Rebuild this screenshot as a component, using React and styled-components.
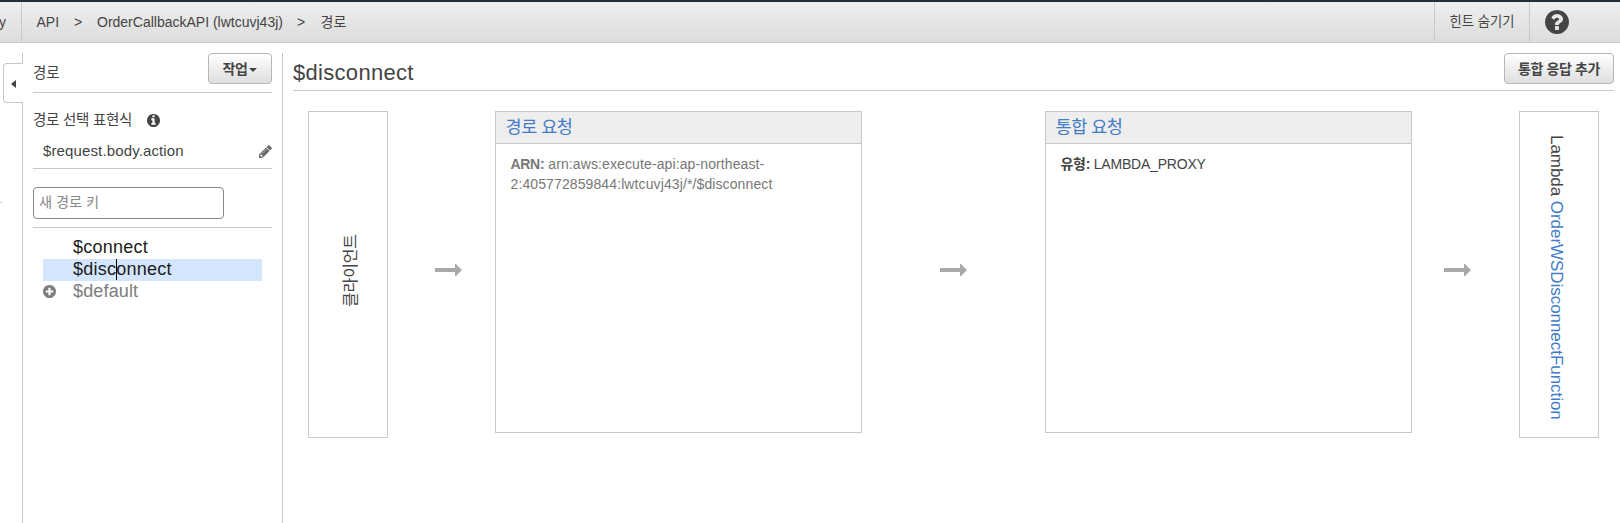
import React from "react";
import styled, { createGlobalStyle } from "styled-components";

const GlobalStyle = createGlobalStyle`
  * { box-sizing: border-box; }
  body {
    margin: 0;
    background: #fff;
    color: #444;
    font-family: "Liberation Sans", "Noto Sans CJK KR", sans-serif;
    font-size: 14px;
    line-height: 20px;
    overflow: hidden;
  }
`;

const Page = styled.div`
  display: flex;
  flex-direction: column;
  width: 1620px;
  height: 523px;
  overflow: hidden;
`;

const Header = styled.header`
  display: flex;
  flex: none;
  height: 43px;
  border-top: 2px solid #232f3e;
  border-bottom: 1px solid #ccc;
  background: linear-gradient(#eee, #ddd);
`;

const Product = styled.div`
  display: flex;
  justify-content: flex-end;
  width: 22px;
  padding: 10px 15px 0 0;
  border-right: 1px solid #c8c8c8;
`;

const Crumbs = styled.nav`
  display: flex;
  flex: 1;
  padding: 10px 0 0 14.5px;
  white-space: nowrap;
`;

const Crumb = styled.span`
  width: ${(p) => p.$width}px;
`;

const HintToggle = styled.div`
  display: flex;
  justify-content: center;
  width: 95px;
  padding-top: 10px;
  font-size: 13.3px;
  border-left: 1px solid #c8c8c8;
`;

const Help = styled.div`
  width: 91px;
  padding: 8px 0 0 15px;
  border-left: 1px solid #c8c8c8;
`;

const Icon = styled.svg`
  display: block;
  flex: none;
  width: ${(p) => p.$size}px;
  height: ${(p) => p.$size}px;
  fill: currentColor;
  fill-rule: evenodd;
`;

const Body = styled.div`
  display: flex;
  flex: 1;
  padding-top: 10px;
`;

const Gutter = styled.div`
  display: flex;
  flex-direction: column;
  width: 23px;
`;

const GutterLine = styled.div`
  align-self: flex-end;
  width: 1px;
  height: ${(p) => p.$height};
  flex: ${(p) => (p.$height ? "none" : 1)};
  background: #c8c8c8;
`;

const CollapseTab = styled.div`
  display: flex;
  align-items: center;
  align-self: flex-end;
  width: 20px;
  height: 40px;
  padding: 2px 0 0 7px;
  border: 1px solid #c8c8c8;
  border-right: 0;
  border-radius: 4px 0 0 4px;
`;

const RemnantLine = styled.div`
  position: absolute;
  left: 0;
  top: 202px;
  width: 2px;
  height: 1px;
  background: #c8c8c8;
`;

const Sidebar = styled.aside`
  width: 260px;
  padding: 0 10px;
  border-right: 1px solid #c8c8c8;
`;

const SidebarHead = styled.div`
  display: flex;
  justify-content: space-between;
  height: 40px;
  border-bottom: 1px solid #c8c8c8;
`;

const SidebarTitle = styled.div`
  padding-top: 10px;
  font-size: 14.5px;
`;

const Button = styled.button`
  display: flex;
  align-items: center;
  justify-content: center;
  gap: 2px;
  width: ${(p) => p.$width}px;
  height: 31px;
  padding: 0 0 1px;
  border: 1px solid #b6b6b6;
  border-radius: 4px;
  background: linear-gradient(#fff, #dedede);
  color: #444;
  font: bold 14px "Liberation Sans", "Noto Sans CJK KR", sans-serif;
  white-space: nowrap;
  letter-spacing: -0.4px;
  svg { margin-top: 3px; }
`;

const Expression = styled.div`
  height: 76px;
  border-bottom: 1px solid #c8c8c8;
`;

const ExpressionLabel = styled.div`
  display: flex;
  align-items: center;
  justify-content: space-between;
  width: 126.5px;
  padding-top: 17px;
  font-size: 14.5px;
  letter-spacing: -0.25px;
  white-space: nowrap;
`;

const ExpressionValue = styled.div`
  display: flex;
  justify-content: space-between;
  align-items: center;
  padding: 11px 0 0 10px;
  font-size: 15px;
  letter-spacing: 0.13px;
  svg { color: #6a6a6a; }
`;

const NewRoute = styled.div`
  height: 59px;
  padding-top: 18px;
  border-bottom: 1px solid #c8c8c8;
`;

const RouteInput = styled.input`
  display: block;
  width: 191px;
  height: 32px;
  padding: 0 5px 2px;
  border: 1px solid #888;
  border-radius: 4px;
  font: 14.2px "Liberation Sans", "Noto Sans CJK KR", sans-serif;
  outline: none;
  &::placeholder { color: #888; opacity: 1; }
`;

const RouteList = styled.div`
  padding: 9px 10px 0;
`;

const RouteRow = styled.div`
  display: flex;
  align-items: center;
  height: 22px;
  background: ${(p) => (p.$selected ? "#d4e6fd" : "transparent")};
  color: ${(p) => (p.$muted ? "#7d7d7d" : "#1c1c1c")};
  font-size: 18px;
  line-height: 20px;
  letter-spacing: ${(p) => (p.$muted ? 0.15 : 0.25)}px;
`;

const RouteIcon = styled.span`
  display: flex;
  width: 30px;
  padding-bottom: 1px;
`;

const RouteName = styled.span`
  position: relative;
  height: 22px;
`;

const Caret = styled.span`
  position: absolute;
  left: 43px;
  top: 0;
  width: 1px;
  height: 21px;
  background: #000;
`;

const Main = styled.main`
  flex: 1;
  padding: 0 6px 0 10px;
`;

const MainHead = styled.div`
  display: flex;
  justify-content: space-between;
  height: 38px;
  border-bottom: 1px solid #c8c8c8;
`;

const Title = styled.h1`
  margin: 0;
  padding-top: 5px;
  font-size: 22px;
  font-weight: normal;
  line-height: 30px;
  letter-spacing: 0.3px;
`;

const Flow = styled.div`
  display: flex;
  align-items: flex-start;
  padding: 20px 0 0 15px;
`;

const Endpoint = styled.div`
  display: flex;
  align-items: center;
  justify-content: center;
  flex: none;
  width: 80px;
  height: 327px;
  padding: ${(p) => p.$padding};
  border: 1px solid #c8c8c8;
  font-size: ${(p) => p.$size}px;
`;

const VerticalText = styled.span`
  writing-mode: vertical-rl;
  text-orientation: sideways;
  white-space: nowrap;
  letter-spacing: ${(p) => p.$spacing || 0}px;
  transform: ${(p) => (p.$upward ? "rotate(180deg)" : "none")};
`;

const Link = styled.span`
  color: #427bc6;
`;

const ArrowSlot = styled.div`
  flex: none;
  width: ${(p) => p.$width}px;
  padding: 153px 0 0 ${(p) => p.$before}px;
  svg { display: block; }
`;

const Card = styled.section`
  flex: none;
  width: 367px;
  height: 322px;
  border: 1px solid #c8c8c8;
`;

const CardHead = styled.h2`
  margin: 0;
  height: 32px;
  padding: 0 9.5px;
  border-bottom: 1px solid #c8c8c8;
  background: #eee;
  color: #427bc6;
  font-size: 17.5px;
  font-weight: normal;
  line-height: 31px;
  letter-spacing: -0.45px;
`;

const CardBody = styled.div`
  padding: 10px 14.5px;
  color: ${(p) => (p.$muted ? "#777" : "#444")};
  letter-spacing: ${(p) => p.$spacing || 0}px;
  white-space: nowrap;
`;

const CardLabel = styled.b`
  letter-spacing: -0.3px;
`;

const DISC =
  "M1664 896q0 209-103 385.5t-279.5 279.5-385.5 103-385.5-103-279.5-279.5-103-385.5 103-385.5 279.5-279.5 385.5-103 385.5 103 279.5 279.5 103 385.5z";

const ICONS = {
  question:
    DISC +
    "M1024 1376v-192q0-14-9-23t-23-9h-192q-14 0-23 9t-9 23v192q0 14 9 23t23 9h192q14 0 23-9t9-23zm256-672q0-88-55.5-163t-138.5-116-170-41q-243 0-371 213-15 24 8 42l132 100q7 6 19 6 16 0 25-12 53-68 86-92 34-24 86-24 48 0 85.5 26t37.5 59q0 38-20 61t-68 45q-63 28-115.5 86.5t-52.5 125.5v36q0 14 9 23t23 9h192q14 0 23-9t9-23q0-19 21.5-49.5t54.5-49.5q32-18 49-28.5t46-35 44.5-48 28-60.5 12.5-81z",
  info:
    DISC +
    "M1152 1376v-160q0-14-9-23t-23-9h-96v-512q0-14-9-23t-23-9h-320q-14 0-23 9t-9 23v160q0 14 9 23t23 9h96v320h-96q-14 0-23 9t-9 23v160q0 14 9 23t23 9h448q14 0 23-9t9-23zm-128-896v-160q0-14-9-23t-23-9h-192q-14 0-23 9t-9 23v160q0 14 9 23t23 9h192q14 0 23-9t9-23z",
  plus:
    DISC +
    "M1344 960v-128q0-26-19-45t-45-19h-256v-256q0-26-19-45t-45-19h-128q-26 0-45 19t-19 45v256h-256q-26 0-45 19t-19 45v128q0 26 19 45t45 19h256v256q0 26 19 45t45 19h128q26 0 45-19t19-45v-256h256q26 0 45-19t19-45z",
  pencil:
    "M491 1536l91-91-235-235-91 91v107h128v128h107zm523-928q0-22-22-22-10 0-17 7l-542 542q-7 7-7 17 0 22 22 22 10 0 17-7l542-542q7-7 7-17zm-54-192l416 416-832 832h-416v-416zm683 96q0 53-37 90l-166 166-416-416 166-165q36-38 90-38 53 0 91 38l235 234q37 39 37 91z",
};

const Glyph = ({ name, size }) => (
  <Icon $size={size} viewBox="128 128 1536 1536">
    <path d={ICONS[name]} />
  </Icon>
);

const Arrow = ({ width, before }) => (
  <ArrowSlot $width={width} $before={before}>
    <svg width="27" height="12" viewBox="0 0 27 12">
      <path d="M0 4h20V0h1l6 6-6 6h-1V8H0z" fill="#a9a9a9" />
    </svg>
  </ArrowSlot>
);

export default function App() {
  return (
    <Page>
      <GlobalStyle />
      <Header>
        <Product>y</Product>
        <Crumbs>
          <Crumb $width={37.5}>API</Crumb>
          <Crumb $width={23}>&gt;</Crumb>
          <Crumb $width={200}>OrderCallbackAPI (lwtcuvj43j)</Crumb>
          <Crumb $width={23.5}>&gt;</Crumb>
          <Crumb>경로</Crumb>
        </Crumbs>
        <HintToggle>힌트 숨기기</HintToggle>
        <Help><Glyph name="question" size={24} /></Help>
      </Header>
      <Body>
        <Gutter>
          <GutterLine $height="10px" />
          <CollapseTab>
            <svg width="5" height="8" viewBox="0 0 5 8"><path d="M5 0v8L0 4z" fill="#444" /></svg>
          </CollapseTab>
          <GutterLine />
        </Gutter>
        <RemnantLine />
        <Sidebar>
          <SidebarHead>
            <SidebarTitle>경로</SidebarTitle>
            <Button $width={64}>
              작업
              <svg width="8" height="4" viewBox="0 0 8 4"><path d="M0 0h8L4 4z" fill="#444" /></svg>
            </Button>
          </SidebarHead>
          <Expression>
            <ExpressionLabel>경로 선택 표현식<Glyph name="info" size={13} /></ExpressionLabel>
            <ExpressionValue>$request.body.action<Glyph name="pencil" size={13} /></ExpressionValue>
          </Expression>
          <NewRoute><RouteInput placeholder="새 경로 키" /></NewRoute>
          <RouteList>
            <RouteRow><RouteIcon /><RouteName>$connect</RouteName></RouteRow>
            <RouteRow $selected><RouteIcon /><RouteName>$disconnect<Caret /></RouteName></RouteRow>
            <RouteRow $muted>
              <RouteIcon><Glyph name="plus" size={13} /></RouteIcon>
              <RouteName>$default</RouteName>
            </RouteRow>
          </RouteList>
        </Sidebar>
        <Main>
          <MainHead>
            <Title>$disconnect</Title>
            <Button $width={110}>통합 응답 추가</Button>
          </MainHead>
          <Flow>
            <Endpoint $size={16} $padding="0 0 7px 5px">
              <VerticalText $upward $spacing={-0.1}>클라이언트</VerticalText>
            </Endpoint>
            <Arrow width={107} before={47} />
            <Card>
              <CardHead>경로 요청</CardHead>
              <CardBody $muted $spacing={0.11}>
                <CardLabel>ARN:</CardLabel> arn:aws:execute-api:ap-northeast-<br />
                2:405772859844:lwtcuvj43j/*/$disconnect
              </CardBody>
            </Card>
            <Arrow width={183} before={78} />
            <Card>
              <CardHead>통합 요청</CardHead>
              <CardBody $spacing={-0.2}><CardLabel>유형:</CardLabel> LAMBDA_PROXY</CardBody>
            </Card>
            <Arrow width={107} before={32} />
            <Endpoint $size={17} $padding="5px 6px 0 0">
              <VerticalText $spacing={-0.05}>Lambda <Link>OrderWSDisconnectFunction</Link></VerticalText>
            </Endpoint>
          </Flow>
        </Main>
      </Body>
    </Page>
  );
}
